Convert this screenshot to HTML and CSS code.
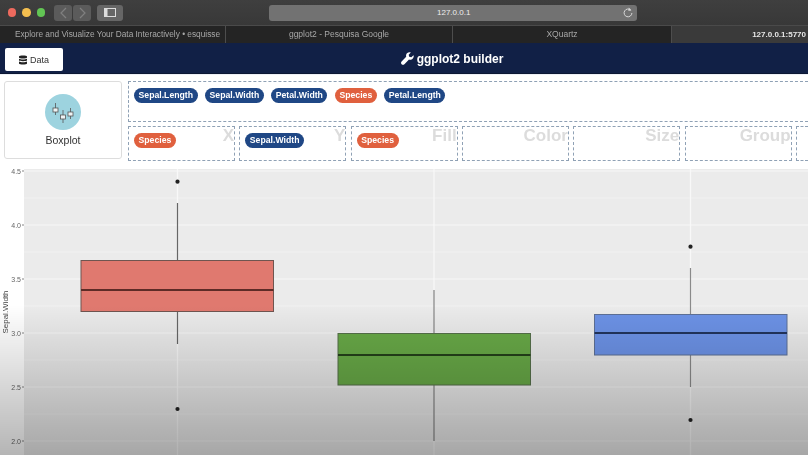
FILE: index.html
```html
<!DOCTYPE html>
<html lang="en">

<head>
    <meta charset="UTF-8">
    <title>ggplot2 builder</title>
    <link rel="stylesheet" href="styles.css">
</head>

<body>
    <div class="toolbar">
        <div class="lights">
            <span class="light red"></span>
            <span class="light yellow"></span>
            <span class="light green"></span>
        </div>
        <div class="nav-buttons">
            <span class="nav-btn">
                <svg width="7" height="12" viewBox="0 0 7 12"><path d="M6 1 1 6l5 5" fill="none" stroke="#808080" stroke-width="1.2"/></svg>
            </span>
            <span class="nav-btn">
                <svg width="7" height="12" viewBox="0 0 7 12"><path d="M1 1l5 5-5 5" fill="none" stroke="#808080" stroke-width="1.2"/></svg>
            </span>
        </div>
        <span class="side-btn">
            <svg width="12" height="9" viewBox="0 0 12 9"><rect x=".5" y=".5" width="11" height="8" fill="none" stroke="#ddd"/><rect x="1" y="1" width="2.500" height="7" fill="#ddd"/></svg>
        </span>
        <div class="url-bar">
            <span class="url-text">127.0.0.1</span>
            <svg class="reload" width="10" height="11" viewBox="0 0 10 11"><path d="M7.8 3.2A3.9 3.9 0 1 0 8.9 6" fill="none" stroke="#d8d8d8" stroke-width="1"/><path d="M5.8 .6 8.4 3.2 5.4 4Z" fill="#d8d8d8"/></svg>
        </div>
    </div>

    <div class="tabs">
        <div class="tab tab-first">Explore and Visualize Your Data Interactively • esquisse</div>
        <div class="tab tab-second">ggplot2 - Pesquisa Google</div>
        <div class="tab tab-third">XQuartz</div>
        <div class="tab tab-active">127.0.0.1:5770</div>
    </div>

    <div class="navbar">
        <button class="data-btn" type="button">
            <svg width="8" height="10" viewBox="0 0 8 10"><path d="M0 1.5C0 .2 8 .2 8 1.5v1C8 3.8 0 3.8 0 2.5ZM0 3.8c1.5 1 6.500 1 8 0v1.500C8 6.500 0 6.500 0 5.300ZM0 6.600c1.500 1 6.500 1 8 0v1.800C8 9.800 0 9.800 0 8.400Z" fill="#222"/></svg>
            Data
        </button>
        <div class="title">
            <svg width="13" height="13" viewBox="0 0 13 13"><path d="M12.500 3.200 10.300 5.300 8.200 4.800 7.700 2.700 9.800.5C8-.3 5.500.7 5.100 3c-.1.700 0 1.300.1 1.800L.6 9.400c-.8.800-.8 2 0 2.800.8.800 2 .8 2.800 0l4.600-4.600c.6.200 1.200.200 1.900.1 2.300-.5 3.300-3 2.600-4.500Z" fill="#fff"/></svg>
            ggplot2 builder
        </div>
    </div>

    <div class="builder">
        <div class="geom-card">
            <span class="geom-icon">
                <svg width="36" height="36" viewBox="0 0 36 36">
                    <circle cx="18" cy="18" r="18" fill="#9dd3df"/>
                    <g fill="#eef3f4" stroke="#555" stroke-width=".8">
                        <path d="M10.500 9v12M18 16v13M25.500 14v11"/>
                        <rect x="8" y="14" width="5" height="4"/>
                        <rect x="15.500" y="21" width="5" height="4"/>
                        <rect x="23" y="18" width="5" height="4"/>
                    </g>
                </svg>
            </span>
            <span class="geom-name">Boxplot</span>
        </div>
        <div class="zones">
            <div class="zone-top">
                <span class="pill blue">Sepal.Length</span>
                <span class="pill blue">Sepal.Width</span>
                <span class="pill blue">Petal.Width</span>
                <span class="pill orange">Species</span>
                <span class="pill blue">Petal.Length</span>
            </div>
            <div class="zone-row">
                <div class="drop"><span class="pill orange">Species</span><span class="drop-label">X</span></div>
                <div class="drop"><span class="pill blue">Sepal.Width</span><span class="drop-label">Y</span></div>
                <div class="drop"><span class="pill orange">Species</span><span class="drop-label">Fill</span></div>
                <div class="drop"><span class="drop-label">Color</span></div>
                <div class="drop"><span class="drop-label">Size</span></div>
                <div class="drop"><span class="drop-label">Group</span></div>
                <div class="drop drop-last"></div>
            </div>
        </div>
    </div>

    <div class="plot">
        <svg class="plot-svg" width="808" height="288" viewBox="0 167 808 288">
            <rect x="24" y="169" width="784" height="286" fill="#ebebeb"/>

            <!-- grid -->
            <g stroke="#f4f4f4" stroke-width=".7">
                <path d="M24 198H808M24 252H808M24 306H808M24 360H808M24 414H808"/>
            </g>
            <g stroke="#f8f8f8" stroke-width="1.200">
                <path d="M24 171H808M24 225H808M24 279H808M24 333H808M24 387H808M24 441H808"/>
                <path d="M177.500 169V455M434 169V455M690.500 169V455"/>
            </g>

            <!-- y axis -->
            <g stroke="#666" stroke-width=".8">
                <path d="M22 171h2M22 225h2M22 279h2M22 333h2M22 387h2M22 441h2"/>
            </g>
            <g class="tick" text-anchor="end">
                <text x="21" y="173.500">4.5</text>
                <text x="21" y="227.500">4.0</text>
                <text x="21" y="281.500">3.5</text>
                <text x="21" y="335.500">3.0</text>
                <text x="21" y="389.500">2.5</text>
                <text x="21" y="443.500">2.0</text>
            </g>
            <text class="axis-name" transform="translate(8 312) rotate(-90)" text-anchor="middle">Sepal.Width</text>

            <!-- setosa -->
            <path d="M177.500 203V260M177.500 311V344" stroke="#666" stroke-width="1.200"/>
            <rect x="81" y="260.500" width="192.500" height="51" fill="#e0796f" stroke="#6f5550"/>
            <path d="M81 290H273.500" stroke="#5e2b26" stroke-width="1.800"/>
            <circle cx="177.500" cy="181.700" r="2.100" fill="#222"/>
            <circle cx="177.500" cy="409" r="2.100" fill="#222"/>

            <!-- versicolor -->
            <path d="M434 290V333M434 385V441" stroke="#808080" stroke-width="1.200"/>
            <rect x="338" y="333.500" width="192.500" height="51.500" fill="#68a947" stroke="#56704a"/>
            <path d="M338 355H530.500" stroke="#24401a" stroke-width="1.800"/>

            <!-- virginica -->
            <path d="M690.500 268V314M690.500 355V387" stroke="#8a8a8a" stroke-width="1.200"/>
            <rect x="594.500" y="314.500" width="192.500" height="40.500" fill="#6c92e6" stroke="#5d7096"/>
            <path d="M594.500 333H787" stroke="#22345c" stroke-width="1.800"/>
            <circle cx="690.500" cy="246.700" r="2.100" fill="#222"/>
            <circle cx="690.500" cy="420" r="2.100" fill="#222"/>
        </svg>
        <div class="shade"></div>
    </div>
</body>

</html>
```

FILE: styles.css
```css
html,
body {
    margin: 0;
    height: 455px;
    overflow: hidden;
}

body {
    width: 808px;
    background-color: #fff;
    font-family: "Liberation Sans", Arial, sans-serif;
    filter: blur(0.35px);
}

/* browser bar */
.toolbar {
    display: flex;
    align-items: center;
    height: 25px;
    box-sizing: border-box;
    padding-left: 7.5px;
    background: linear-gradient(#3f3f3f, #383838);
}

.lights {
    display: flex;
    gap: 6px;
}

.light {
    width: 8.5px;
    height: 8.5px;
    border-radius: 50%;
}

.red {
    background-color: #ed6a5e;
}

.yellow {
    background-color: #f4bf4f;
}

.green {
    background-color: #62c554;
}

.nav-buttons {
    display: flex;
    gap: 1px;
    margin-left: 9px;
}

.nav-btn {
    display: flex;
    align-items: center;
    justify-content: center;
    width: 18px;
    height: 16px;
    border-radius: 3px;
    background-color: #5b5b5b;
}

.side-btn {
    display: flex;
    align-items: center;
    justify-content: center;
    width: 26px;
    height: 16px;
    margin-left: 6px;
    border-radius: 3px;
    background-color: #666;
}

.url-bar {
    display: flex;
    align-items: center;
    justify-content: space-between;
    width: 368px;
    height: 16px;
    box-sizing: border-box;
    margin-left: 146px;
    padding: 0 4px 0 168px;
    border-radius: 3px;
    background-color: #727272;
}

.url-text {
    color: #eee;
    font-size: 8px;
}

/* tabs */
.tabs {
    display: flex;
    height: 18px;
    background-color: #242424;
    border-top: 1px solid #4a4a4a;
    box-sizing: border-box;
}

.tab {
    box-sizing: border-box;
    border-right: 1px solid #4d4d4d;
    color: #a8a8a8;
    font-size: 8.5px;
    line-height: 17px;
    text-align: center;
    white-space: nowrap;
}

.tab-first {
    width: 226px;
    padding-left: 10px;
    font-size: 8.3px;
}

.tab-second {
    width: 227px;
}

.tab-third {
    width: 219px;
}

.tab-active {
    flex: 1;
    padding-right: 2px;
    border-right: none;
    background-color: #3a3a3a;
    color: #e6e6e6;
    font-size: 8px;
    font-weight: bold;
    text-align: right;
}

/* app header */
.navbar {
    position: relative;
    display: flex;
    align-items: center;
    justify-content: center;
    height: 31px;
    padding-top: 1px;
    background-color: #112046;
    border-bottom: 1px solid #0c1733;
    box-sizing: border-box;
}

.data-btn {
    position: absolute;
    left: 5px;
    top: 5px;
    display: flex;
    align-items: center;
    justify-content: center;
    gap: 3px;
    width: 58px;
    height: 23px;
    padding: 0;
    border: none;
    border-radius: 2px;
    background-color: #fff;
    color: #333;
    font-family: inherit;
    font-size: 9px;
}

.title {
    display: flex;
    align-items: center;
    gap: 3px;
    margin-left: 96px;
    color: #fff;
    font-size: 12px;
    font-weight: bold;
}

/* builder */
.builder {
    display: flex;
    gap: 6px;
    height: 93px;
    box-sizing: border-box;
    padding: 6px 0 0 4px;
    border-top: 1px solid #edf0f6;
}

.geom-card {
    display: flex;
    flex-direction: column;
    align-items: center;
    flex: none;
    width: 118px;
    height: 78px;
    box-sizing: border-box;
    padding-top: 12px;
    border: 1px solid #ddd;
    border-radius: 3px;
}

.geom-icon {
    height: 36px;
}

.geom-name {
    margin-top: 4px;
    color: #333;
    font-size: 10.5px;
}

.zones {
    flex: 1;
    min-width: 0;
}

.zone-top {
    display: flex;
    gap: 7.5px;
    height: 41px;
    box-sizing: border-box;
    padding: 6px 0 0 5px;
    border: 1px dashed #8fa1b5;
    border-right: none;
}

.zone-row {
    display: flex;
    gap: 4.33px;
    margin-top: 4px;
}

.drop {
    position: relative;
    flex: none;
    width: 107px;
    height: 35px;
    box-sizing: border-box;
    padding: 2px 0 0 5px;
    border: 1px dashed #8fa1b5;
}

.drop-last {
    flex: 1;
    width: auto;
    border-right: none;
}

.drop-label {
    position: absolute;
    right: 0;
    top: 0;
    color: #dcdcdc;
    font-size: 17px;
    font-weight: bold;
    line-height: 17px;
}

.pill {
    display: inline-block;
    height: 15px;
    padding: 0 4.5px;
    border-radius: 8px;
    color: #fff;
    font-size: 8.7px;
    font-weight: bold;
    line-height: 14px;
}

.blue {
    background-color: #1f4785;
}

.orange {
    background-color: #e0603e;
}

/* plot */
.plot {
    position: relative;
    height: 288px;
}

.plot-svg {
    display: block;
}

.tick {
    fill: #666;
    font-size: 7px;
}

.axis-name {
    fill: #444;
    font-size: 8px;
}

.shade {
    position: absolute;
    left: 0;
    right: 0;
    bottom: 0;
    height: 150px;
    background: linear-gradient(rgba(0, 0, 0, 0), rgba(0, 0, 0, 0.29));
}
```
